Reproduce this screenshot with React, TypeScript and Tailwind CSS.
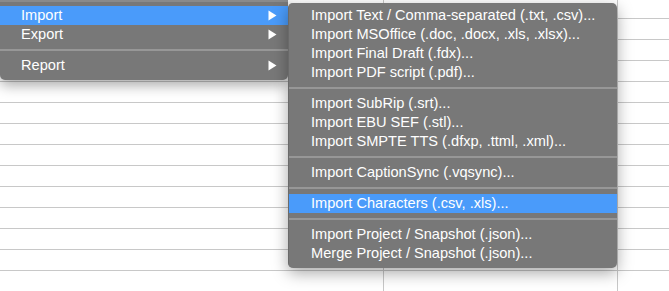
import React from "react";

const font = { fontFamily: '"Liberation Sans", Arial, sans-serif' };

function Arrow() {
  return (
    <svg width="9" height="11" viewBox="0 0 9 11" className="shrink-0">
      <polygon points="0.5,0.5 8.5,5.5 0.5,10.5" fill="#ffffff" />
    </svg>
  );
}

function Sep() {
  return (
    <div className="h-[12px] flex items-center">
      <div className="h-[2px] w-full bg-[#979797]" />
    </div>
  );
}

function Item({ label, active, arrow, pl }: { label: string; active?: boolean; arrow?: boolean; pl?: string }) {
  return (
    <div
      className={`h-[19px] flex items-center justify-between ${pl ?? "pl-[22px]"} pr-[11px] text-[14.6px] leading-none text-white ${
        active ? "bg-[#4a9bfa]" : ""
      }`}
    >
      <span className="whitespace-nowrap">{label}</span>
      {arrow && <Arrow />}
    </div>
  );
}

function GridRow({ h }: { h: string }) {
  return (
    <div className={`flex ${h} border-t border-[#c8c8c8]`}>
      <div className="w-[383px]" />
      <div className="w-[234px] border-l border-[#c8c8c8]" />
      <div className="flex-1 border-l border-[#c8c8c8]" />
    </div>
  );
}

export default function App() {
  const subItems: (string | null)[] = [
    "Import Text / Comma-separated (.txt, .csv)...",
    "Import MSOffice (.doc, .docx, .xls, .xlsx)...",
    "Import Final Draft (.fdx)...",
    "Import PDF script (.pdf)...",
    null,
    "Import SubRip (.srt)...",
    "Import EBU SEF (.stl)...",
    "Import SMPTE TTS (.dfxp, .ttml, .xml)...",
    null,
    "Import CaptionSync (.vqsync)...",
    null,
    "Import Characters (.csv, .xls)...",
    null,
    "Import Project / Snapshot (.json)...",
    "Merge Project / Snapshot (.json)...",
  ];
  return (
    <div className="relative w-[669px] h-[291px] overflow-hidden bg-white" style={font}>
      {/* background sheet */}
      <div className="flex flex-col">
        <div className="flex h-[18px]">
          <div className="w-[383px]" />
          <div className="w-[234px] border-l border-[#c8c8c8]" />
          <div className="flex-1 border-l border-[#c8c8c8]" />
        </div>
        {Array.from({ length: 13 }).map((_, i) => (
          <GridRow key={i} h="h-[21px]" />
        ))}
      </div>

      {/* main menu */}
      <div className="absolute left-0 top-0 w-[288px] h-[80px] bg-[#787878] rounded-b-[5px] shadow-[0_5px_14px_rgba(0,0,0,0.35)] flex flex-col">
        <div className="h-[2px] bg-[#8a8a8a]" />
        <div className="h-[4px]" />
        <Item label="Import" active arrow pl="pl-[21px]" />
        <Item label="Export" arrow pl="pl-[21px]" />
        <Sep />
        <Item label="Report" arrow pl="pl-[21px]" />
      </div>

      {/* submenu */}
      <div className="absolute left-[288px] top-[3px] w-[329px] h-[265px] bg-[#787878] rounded-[5px] shadow-[0_5px_16px_rgba(0,0,0,0.35)] border-l border-[#6a6a6a] flex flex-col pt-[3px]">
        {subItems.map((s, i) =>
          s === null ? (
            <Sep key={i} />
          ) : (
            <Item key={i} label={s} active={s.startsWith("Import Characters")} />
          )
        )}
      </div>
    </div>
  );
}
